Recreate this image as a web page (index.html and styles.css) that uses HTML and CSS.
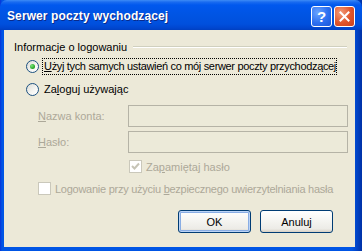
FILE: index.html
```html
<!DOCTYPE html>
<html>
<head>
    <meta charset="utf-8">
    <title>Serwer poczty wychodzącej</title>
    <link rel="stylesheet" href="styles.css">
</head>
<body>
    <div class="window">
        <!-- Title bar -->
        <div class="titlebar">
            <span class="title">Serwer poczty wychodzącej</span>
            <div class="caption-buttons">
                <span class="cap-btn help-btn">?</span>
                <span class="cap-btn close-btn">
                    <svg width="11" height="11" viewBox="0 0 11 11">
                        <path d="M1.5 1.5 L9.5 9.5 M9.5 1.5 L1.5 9.5" stroke="#fff" stroke-width="2" stroke-linecap="square"/>
                    </svg>
                </span>
            </div>
        </div>

        <!-- Dialog content -->
        <div class="client">
            <div class="group-head">
                <span>Informacje o logowaniu</span>
                <span class="rule"></span>
            </div>

            <div class="option">
                <span class="radio checked"></span>
                <span class="focus"><u>U</u>żyj tych samych ustawień co mój serwer poczty przychodzącej</span>
            </div>
            <div class="option">
                <span class="radio"></span>
                <span class="opt-text">Za<u>l</u>oguj używając</span>
            </div>

            <div class="field first-field">
                <label class="disabled"><u>N</u>azwa konta:</label>
                <span class="input"></span>
            </div>
            <div class="field">
                <label class="disabled"><u>H</u>asło:</label>
                <span class="input"></span>
            </div>

            <div class="check-row remember">
                <span class="checkbox checked">
                    <svg width="9" height="9" viewBox="0 0 9 9">
                        <path d="M1 4 L3.5 6.5 L8 1.5" stroke="#c6c4b6" stroke-width="2" fill="none"/>
                    </svg>
                </span>
                <span class="disabled">Za<u>p</u>amiętaj hasło</span>
            </div>
            <div class="check-row secure">
                <span class="checkbox"></span>
                <span class="disabled tight">Logowanie przy użyciu <u>b</u>ezpiecznego uwierzytelniania hasła</span>
            </div>

            <div class="buttons">
                <button class="btn default-btn">OK</button>
                <button class="btn">Anuluj</button>
            </div>
        </div>
    </div>
</body>
</html>
```

FILE: styles.css
```css
body {
    margin: 0;
    font-family: "Liberation Sans", Arial, sans-serif;
    font-size: 11px;
    white-space: nowrap;
}
.window {
    width: 362px;
    height: 251px;
    display: flex;
    flex-direction: column;
    background: linear-gradient(to right, #0831d9 0, #0055e5 2px, #0055e5 352px, #0031a6 362px);
}
.titlebar {
    height: 30px;
    display: flex;
    align-items: center;
    justify-content: space-between;
    padding: 0 7px 0 7px;
    background: linear-gradient(to bottom, #3d8cf6 0, #1a6cf0 2px, #0058ee 5px, #0054e3 15px, #0050dd 24px, #0046cf 28px, #003fc0 30px);
    border-radius: 7px 7px 0 0;
}
.title {
    color: #fff;
    font-weight: bold;
    font-size: 12px;
    letter-spacing: 0.1px;
    text-shadow: 1px 1px 0 #0a2a8a;
    margin-top: 1px;
}
.caption-buttons {
    display: flex;
    gap: 2px;
    margin-top: 2px;
}
.cap-btn {
    width: 19px;
    height: 19px;
    border: 1px solid #fff;
    border-radius: 3px;
    display: flex;
    align-items: center;
    justify-content: center;
    color: #fff;
    font-weight: bold;
    font-size: 15px;
}
.help-btn {
    background: radial-gradient(circle at 30% 30%, #6aa4ff 0, #2c6ff0 55%, #1b56d8 100%);
}
.close-btn {
    background: radial-gradient(circle at 30% 30%, #f39c7a 0, #e0542a 55%, #c9401c 100%);
}
.client {
    flex: 1;
    background: #ece9d8;
    margin: 0 7px 4px 4px;
    padding: 10px 0 0 10px;
    display: flex;
    flex-direction: column;
}
.group-head {
    display: flex;
    align-items: center;
    height: 13px;
    margin-bottom: 5px;
}
.rule {
    flex: 1;
    height: 0;
    border-top: 1px solid #d0d0bf;
    border-bottom: 1px solid #fff;
    margin: 1px 8px 0 6px;
}
.option {
    display: flex;
    align-items: center;
    height: 16px;
    margin-left: 12px;
    margin-bottom: 7px;
}
.radio {
    width: 11px;
    height: 11px;
    border: 1px solid #1c5180;
    border-radius: 50%;
    background: linear-gradient(135deg, #dcdcd5 0, #f6f6f3 60%, #fff 100%);
    margin-right: 3px;
    position: relative;
    flex-shrink: 0;
}
.radio.checked::after {
    content: "";
    position: absolute;
    left: 3px;
    top: 3px;
    width: 5px;
    height: 5px;
    border-radius: 50%;
    background: radial-gradient(circle at 35% 35%, #7be47b 0, #21a121 70%, #1a8a1a 100%);
}
.focus {
    border: 1px dotted #000;
    padding: 1px 0 1px 1px;
    line-height: 13px;
    letter-spacing: -0.33px;
}
.opt-text {
    padding-left: 2px;
}
.disabled {
    color: #aca899;
}
.tight {
    letter-spacing: -0.26px;
}
.field {
    display: flex;
    align-items: center;
    height: 22px;
    margin-left: 24px;
    margin-bottom: 4px;
}
.first-field {
    margin-top: 1px;
}
.field label {
    width: 90px;
}
.input {
    width: 218px;
    height: 20px;
    border: 1px solid #b5b3a6;
    background: #ecead9;
}
.check-row {
    display: flex;
    align-items: center;
    height: 13px;
}
.remember {
    margin-left: 115px;
    margin-top: 3px;
}
.secure {
    margin-left: 24px;
    margin-top: 9px;
}
.checkbox {
    width: 11px;
    height: 11px;
    border: 1px solid #cac8bb;
    background: #fff;
    margin-right: 4px;
    display: flex;
    align-items: center;
    justify-content: center;
}
.buttons {
    display: flex;
    gap: 9px;
    margin-top: 15px;
    padding-left: 164px;
}
.btn {
    width: 73px;
    height: 23px;
    padding: 0;
    font-family: "Liberation Sans", Arial, sans-serif;
    font-size: 11px;
    color: #000;
    border: 1px solid #003c74;
    border-radius: 3px;
    background: linear-gradient(to bottom, #fff 0, #f6f6f3 40%, #ecebe6 85%, #d6d0c5 100%);
}
.default-btn {
    box-shadow: inset 0 0 0 1px #bcd4f6, inset 0 0 0 2px #89ade4;
}
```
